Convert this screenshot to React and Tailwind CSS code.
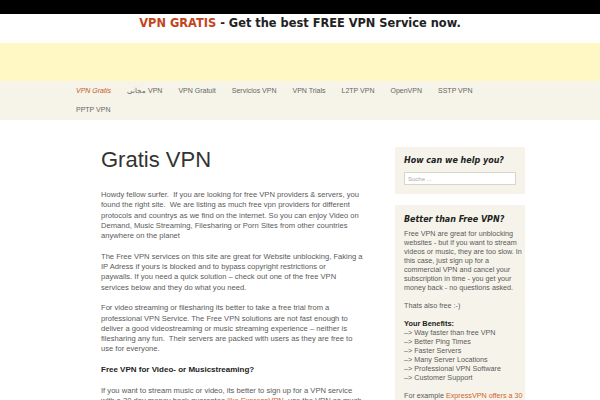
const navItems = ["VPN Gratis", "VPN مجانی", "VPN Gratuit", "Servicios VPN", "VPN Trials", "L2TP VPN", "OpenVPN", "SSTP VPN", "PPTP VPN"];

const benefits = [
  "Way faster than free VPN",
  "Better Ping Times",
  "Faster Servers",
  "Many Server Locations",
  "Professional VPN Software",
  "Customer Support",
];

function Lines({ lines }) {
  return lines.map((l, i) => (
    <span key={i} className="block whitespace-pre">
      {l}
    </span>
  ));
}

export default function App() {
  return (
    <div className="h-[400px] w-[600px] overflow-hidden bg-white font-['Liberation_Sans',Arial,sans-serif] text-[#5a5a5a]">
      <div className="h-[14px] bg-black" />
      <div className="flex h-[29px] justify-center pt-[2px] font-['DejaVu_Sans',sans-serif] text-[11.4px] font-bold leading-[14px] text-[#222]">
        <span className="text-[#c4441a]">VPN GRATIS</span>
        <span className="whitespace-pre"> - Get the best FREE VPN Service now.</span>
      </div>
      <div className="h-[38px] bg-[#fff8c5]" />
      <nav className="h-[39px] bg-[#f6f3e8] pl-[76px] pt-[1px]">
        <div className="flex w-[440px] flex-wrap text-[7px] text-[#666]">
          {navItems.map((item, i) => (
            <a
              key={item}
              dir={i === 1 ? "rtl" : undefined}
              className={
                "mr-[16px] flex h-[19px] items-center " +
                (i === 0 ? "italic text-[#c4591d]" : "")
              }
            >
              {item}
            </a>
          ))}
        </div>
      </nav>

      <div className="flex gap-[30px] pl-[101px] pt-[28px]">
        <main className="w-[264px] text-[7.6px] leading-[10.3px]">
          <h1 className="mb-[18px] text-[22px] leading-[24px] text-[#333]">Gratis VPN</h1>
          <p className="mb-[10.3px]">
            <Lines
              lines={[
                "Howdy fellow surfer.  If you are looking for free VPN providers & servers, you",
                "found the right site.  We are listing as much free vpn providers for different",
                "protocols and countrys as we find on the internet. So you can enjoy Video on",
                "Demand, Music Streaming, Filesharing or Porn Sites from other countries",
                "anywhere on the planet",
              ]}
            />
          </p>
          <p className="mb-[10.3px]">
            <Lines
              lines={[
                "The Free VPN services on this site are great for Website unblocking, Faking a",
                "IP Adress if yours is blocked and to bypass copyright restrictions or",
                "paywalls. If you need a quick solution – check out one of the free VPN",
                "services below and they do what you need.",
              ]}
            />
          </p>
          <p className="mb-[10.3px]">
            <Lines
              lines={[
                "For video streaming or filesharing its better to take a free trial from a",
                "professional VPN Service. The Free VPN solutions are not fast enough to",
                "deliver a good videostreaming or music streaming experience – neither is",
                "filesharing any fun.  Their servers are packed with users as they are free to",
                "use for everyone.",
              ]}
            />
          </p>
          <h2 className="mb-[10.3px] text-[8px] font-bold text-[#222]">Free VPN for Video- or Musicstreaming?</h2>
          <p>
            <span className="block whitespace-pre">If you want to stream music or video, its better to sign up for a VPN service</span>
            <span className="block whitespace-pre">
              with a 30 day money back guarantee <a className="text-[#d0622a]">like ExpressVPN</a>, use the VPN as much
            </span>
          </p>
        </main>

        <aside className="flex w-[130px] flex-col gap-[11px]">
          <div className="-mt-[1px] bg-[#f6f4ea] px-[9px] pb-[9px] pt-[8px]">
            <h3 className="mb-[5px] font-['DejaVu_Sans',sans-serif] text-[8px] font-bold italic text-[#222]">How can we help you?</h3>
            <input
              placeholder="Suche ..."
              className="block h-[13px] w-full border border-[#d8d6cc] bg-white px-[3px] text-[6px] text-[#999] placeholder:text-[#aaa]"
            />
          </div>
          <div className="bg-[#f6f4ea] px-[9px] pb-[9px] pt-[9px] text-[7.2px] leading-[9px]">
            <h3 className="mb-[3px] font-['DejaVu_Sans',sans-serif] text-[8px] font-bold italic leading-[12px] text-[#222]">Better than Free VPN?</h3>
            <p className="mb-[9px]">
              <Lines
                lines={[
                  "Free VPN are great for unblocking",
                  "websites - but if you want to stream",
                  "videos or music, they are too slow. In",
                  "this case, just sign up for a",
                  "commercial VPN and cancel your",
                  "subscription in time - you get your",
                  "money back - no questions asked.",
                ]}
              />
            </p>
            <p className="mb-[9px]">Thats also free :-)</p>
            <p className="mb-[9px]">
              <b className="block text-[7.4px] text-[#222]">Your Benefits:</b>
              {benefits.map((b) => (
                <span key={b} className="block">–&gt; {b}</span>
              ))}
            </p>
            <p className="whitespace-pre">
              For example <a className="text-[#d0622a]">ExpressVPN offers a 30</a>
            </p>
          </div>
        </aside>
      </div>
    </div>
  );
}
